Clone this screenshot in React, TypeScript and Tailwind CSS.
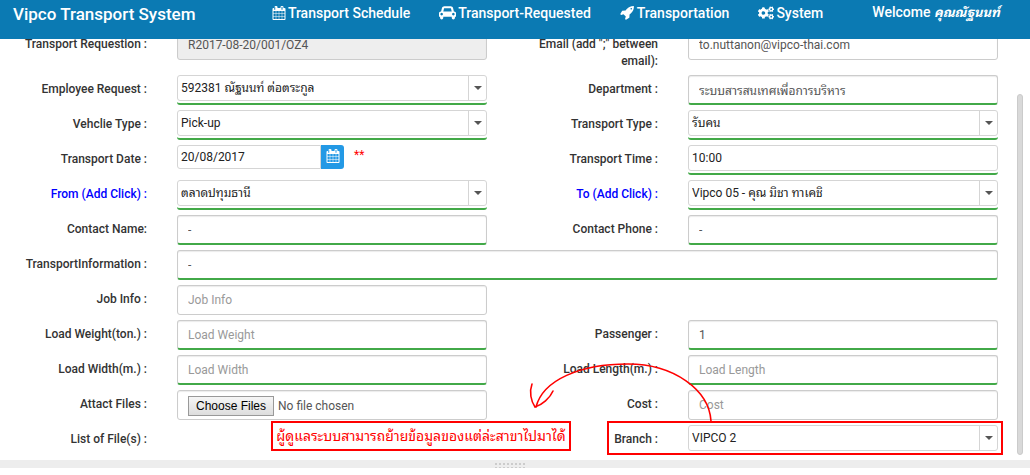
import { useId, type ReactNode } from "react";
import { FaCogs } from "react-icons/fa";

const iconPaths = {
  calendar: {
    box: "0 0 1792 1792",
    d: "M192 1664h288v-288h-288v288zM544 1664h320v-288h-320v288zM192 1312h288v-320h-288v320zM544 1312h320v-320h-320v320zM192 928h288v-288h-288v288zM928 1664h320v-288h-320v288zM544 928h320v-288h-320v288zM1312 1664h288v-288h-288v288zM928 1312h320v-320h-320v320zM416 448v-288q0-13-9.5-22.5t-22.5-9.5h-64q-13 0-22.5 9.5t-9.5 22.5v288q0 13 9.5 22.5t22.5 9.5h64q13 0 22.5-9.5t9.5-22.5zM1312 1312h288v-320h-288v320zM928 928h320v-288h-320v288zM1312 928h288v-288h-288v288zM1344 448v-288q0-13-9.5-22.5t-22.5-9.5h-64q-13 0-22.5 9.5t-9.5 22.5v288q0 13 9.5 22.5t22.5 9.5h64q13 0 22.5-9.5t9.5-22.5zM1728 384v1280q0 52-38 90t-90 38h-1408q-52 0-90-38t-38-90v-1280q0-52 38-90t90-38h128v-96q0-66 47-113t113-47h64q66 0 113 47t47 113v96h384v-96q0-66 47-113t113-47h64q66 0 113 47t47 113v96h128q52 0 90 38t38 90z",
  },
  car: {
    box: "0 0 2048 1792",
    d: "M480 1088q0-66-47-113t-113-47-113 47-47 113 47 113 113 47 113-47 47-113zm36-320h1016l-89-357q-2-8-14-17.5t-21-9.5h-768q-9 0-21 9.5t-14 17.5zm1372 320q0-66-47-113t-113-47-113 47-47 113 47 113 113 47 113-47 47-113zm160-96v384q0 14-9 23t-23 9h-96v128q0 80-56 136t-136 56-136-56-56-136v-128h-1024v128q0 80-56 136t-136 56-136-56-56-136v-128h-96q-14 0-23-9t-9-23v-384q0-93 65.5-158.5t158.5-65.5h28l105-419q23-94 104-157.5t179-63.5h768q98 0 179 63.5t104 157.5l105 419h28q93 0 158.5 65.5t65.5 158.5z",
  },
  rocket: {
    box: "0 0 1792 1792",
    d: "M1440 448q0-40-28-68t-68-28-68 28-28 68 28 68 68 28 68-28 28-68zm224-288q0 249-75.5 430.5t-253.5 360.5q-81 80-195 176l-20 379q-2 16-16 26l-384 224q-7 4-16 4-12 0-23-9l-64-64q-13-14-8-32l85-276-281-281-276 85q-3 1-9 1-14 0-23-9l-64-64q-17-19-5-39l224-384q10-14 26-16l379-20q96-114 176-195 188-187 358-258t431-71q14 0 24 9.5t10 22.5z",
  },
};

function Icon({ name, className }: { name: keyof typeof iconPaths; className: string }) {
  return (
    <svg viewBox={iconPaths[name].box} className={className} fill="currentColor" aria-hidden="true">
      <path d={iconPaths[name].d} />
    </svg>
  );
}

function NavLink({ icon, children }: { icon?: ReactNode; children: ReactNode }) {
  return (
    <a href="#" className="flex items-center gap-[2px] whitespace-nowrap">
      {icon}
      <span>{children}</span>
    </a>
  );
}

function Row({ children }: { children: ReactNode }) {
  return (
    <div className="relative grid grid-cols-[147fr_310fr_141fr_310fr] items-start gap-x-[30px]">
      {children}
    </div>
  );
}

function Label({ htmlFor, link, children }: { htmlFor?: string; link?: boolean; children: ReactNode }) {
  return (
    <label
      htmlFor={htmlFor}
      className={
        link
          ? "pt-[6px] text-right text-[12px] leading-[17px] font-medium text-[#0000ff]"
          : "pt-[6px] text-right text-[12px] leading-[17px] font-medium text-[#333333]"
      }
    >
      {children}
    </label>
  );
}

type TextProps = {
  label: string;
  value?: string;
  placeholder?: string;
  required?: boolean;
  disabled?: boolean;
  wide?: boolean;
};

function TextField({ label, value, placeholder, required, disabled, wide }: TextProps) {
  const id = useId();
  return (
    <>
      <Label htmlFor={id}>{label}</Label>
      <div className={wide ? "col-span-3" : ""}>
        <input
          id={id}
          type="text"
          defaultValue={value}
          placeholder={placeholder}
          disabled={disabled}
          className={
            "block h-[30px] w-full rounded-[3px] border border-[#cccccc] px-[10px] text-[12px] text-[#555555] shadow-[inset_0_1px_1px_rgba(0,0,0,0.08)] placeholder:text-[#999999] " +
            (disabled ? "bg-[#eeeeee] " : "bg-white ") +
            (required ? "border-b-2 border-b-[#42a948]" : "")
          }
        />
      </div>
    </>
  );
}

function SelectField({ label, value, required = true, link }: { label: string; value: string; required?: boolean; link?: boolean }) {
  const id = useId();
  return (
    <>
      <Label htmlFor={id} link={link}>{label}</Label>
      <div className={required ? "h-[30px] rounded-[3px] border-b-2 border-[#42a948]" : "h-[30px]"}>
        <div className="grid h-[26px]">
          <select
            id={id}
            defaultValue={value}
            className="col-start-1 row-start-1 w-full appearance-none rounded-[3px] border border-[#d5d5d5] bg-white pr-5 pl-[3px] text-[12px] text-[#222222]"
          >
            <option>{value}</option>
          </select>
          <span className="pointer-events-none col-start-1 row-start-1 my-px flex w-[19px] items-center justify-center justify-self-end border-l border-[#d5d5d5]">
            <svg viewBox="0 0 8 4" className="h-1 w-2" fill="#555555" aria-hidden="true">
              <path d="M0 0h8L4 4z" />
            </svg>
          </span>
        </div>
      </div>
    </>
  );
}

function DateField() {
  const id = useId();
  return (
    <>
      <Label htmlFor={id}>Transport Date :</Label>
      <div className="flex h-[30px] items-start">
        <input
          id={id}
          type="text"
          defaultValue="20/08/2017"
          className="h-6 w-[144px] rounded-l-[3px] border border-[#d5d5d5] bg-white px-[3px] text-[12px] text-[#222222]"
        />
        <button
          type="button"
          aria-label="Open calendar"
          className="flex h-6 w-[23px] items-center justify-center rounded-r-[3px] bg-[#2399e5] pb-[2px] text-white"
        >
          <Icon name="calendar" className="size-[14px]" />
        </button>
        <span className="ml-[10px] text-[12px] leading-[20px] text-[#ff0000]">**</span>
      </div>
    </>
  );
}

function TimeField() {
  const id = useId();
  return (
    <>
      <Label htmlFor={id}>Transport Time :</Label>
      <div className="h-[30px] rounded-[3px] border-b-2 border-[#42a948]">
        <input
          id={id}
          type="text"
          defaultValue="10:00"
          className="block h-[26px] w-full rounded-[3px] border border-[#d5d5d5] bg-white px-[3px] text-[12px] text-[#222222]"
        />
      </div>
    </>
  );
}

function FileField() {
  const id = useId();
  return (
    <>
      <Label htmlFor={id}>Attact Files :</Label>
      <input
        id={id}
        type="file"
        multiple
        className="block h-[30px] w-full rounded-[3px] border border-[#cccccc] px-[10px] pt-[5px] text-[12px] leading-[20px] text-[#555555] shadow-[inset_0_1px_1px_rgba(0,0,0,0.08)] file:mr-1 file:h-5 file:border file:border-solid file:border-[#999999] file:bg-linear-to-b file:from-[#f6f6f6] file:to-[#dddddd] file:px-[7px] file:font-['Liberation_Sans'] file:text-[12px] file:leading-[16px] file:text-black"
      />
    </>
  );
}

const dots = Array.from({ length: 8 }, (_, i) => i);

export default function App() {
  return (
    <div className="bg-white font-[Roboto,Tahoma,'Noto_Sans_Thai_Looped',Loma,Waree,Garuda,'Noto_Sans',sans-serif]">
      <header className="relative z-10 flex h-[39px] items-start justify-between bg-[#0b7ab3] pr-[30px] pl-[13px] text-white">
        <a href="#" className="pt-[2px] text-[17px] leading-[24px] font-medium whitespace-nowrap">
          Vipco Transport System
        </a>
        <nav className="flex gap-[29px] pt-[2px] text-[14px] leading-[20px] font-medium">
          <NavLink icon={<Icon name="calendar" className="size-[14px]" />}>Transport Schedule</NavLink>
          <NavLink icon={<Icon name="car" className="h-[15px] w-[17px]" />}>Transport-Requested</NavLink>
          <NavLink icon={<Icon name="rocket" className="size-[15px]" />}>Transportation</NavLink>
          <NavLink icon={<FaCogs className="size-4" aria-hidden="true" />}>System</NavLink>
          <span className="ml-5 whitespace-nowrap">
            Welcome <em className="text-[13px] font-bold">คุณณัฐนนท์</em>
          </span>
        </nav>
      </header>

      <main className="-mt-[9px] flex pr-[7px]">
        <form className="flex min-w-0 flex-1 flex-col gap-[5px]">
          <Row>
            <TextField label="Transport Requestion :" value="R2017-08-20/001/OZ4" disabled />
            <TextField label={'Email (add ";" between email):'} value="to.nuttanon@vipco-thai.com" />
          </Row>
          <Row>
            <SelectField label="Employee Request :" value="592381 ณัฐนนท์ ต่อตระกูล" />
            <TextField label="Department :" value="ระบบสารสนเทศเพื่อการบริหาร" required />
          </Row>
          <Row>
            <SelectField label="Vehclie Type :" value="Pick-up" />
            <SelectField label="Transport Type :" value="รับคน" />
          </Row>
          <Row>
            <DateField />
            <TimeField />
          </Row>
          <Row>
            <SelectField label="From (Add Click) :" value="ตลาดปทุมธานี" link />
            <SelectField label="To (Add Click) :" value="Vipco 05 - คุณ มิชา ทาเคชิ" link />
          </Row>
          <Row>
            <TextField label="Contact Name:" value="-" required />
            <TextField label="Contact Phone :" value="-" required />
          </Row>
          <Row>
            <TextField label="TransportInformation :" value="-" required wide />
          </Row>
          <Row>
            <TextField label="Job Info :" placeholder="Job Info" />
          </Row>
          <Row>
            <TextField label="Load Weight(ton.) :" placeholder="Load Weight" required />
            <TextField label="Passenger :" value="1" required />
          </Row>
          <Row>
            <TextField label="Load Width(m.) :" placeholder="Load Width" required />
            <TextField label="Load Length(m.) :" placeholder="Load Length" required />
          </Row>
          <Row>
            <FileField />
            <TextField label="Cost :" placeholder="Cost" />
          </Row>
          <Row>
            <Label>List of File(s) :</Label>
            <div />
            <SelectField label="Branch :" value="VIPCO 2" required={false} />
            <div className="pointer-events-none absolute -top-[4px] -right-[5px] h-[34px] w-[396px] border-2 border-[#ff0000]" />
            <p className="absolute -top-[4px] right-[427px] flex h-[30px] w-[300px] items-center justify-center border-2 border-[#ff0000] bg-white text-[14px] whitespace-nowrap text-[#ff0000]">
              ผู้ดูแลระบบสามารถย้ายข้อมูลของแต่ล่ะสาขาไปมาได้
            </p>
            <svg
              viewBox="0 0 190 65"
              className="pointer-events-none absolute -top-[67px] right-[283px] h-[65px] w-[190px]"
              fill="none"
              stroke="#ff0000"
              strokeWidth="1.6"
              strokeLinecap="round"
              aria-hidden="true"
            >
              <path d="M186 63C184 32 149 6 103 6C55 6 18 22 11 49" />
              <path d="M7 26C4 34 6 43 10 49C17 47 25 40 28 33" />
            </svg>
          </Row>
        </form>
        <div className="mt-16 ml-[19px] w-[6px] shrink-0 rounded-full border border-[#cbcbcb] bg-[#d9d9d9]" />
      </main>

      <footer className="mt-[5px] flex h-2 flex-col items-center gap-[2px] overflow-hidden bg-[#ededed] pt-[3px] pr-[10px]">
        {[0, 1].map((row) => (
          <div key={row} className="flex gap-[2px]">
            {dots.map((dot) => (
              <span key={dot} className="size-[2px] shrink-0 bg-[#cccccc]" />
            ))}
          </div>
        ))}
      </footer>
    </div>
  );
}
